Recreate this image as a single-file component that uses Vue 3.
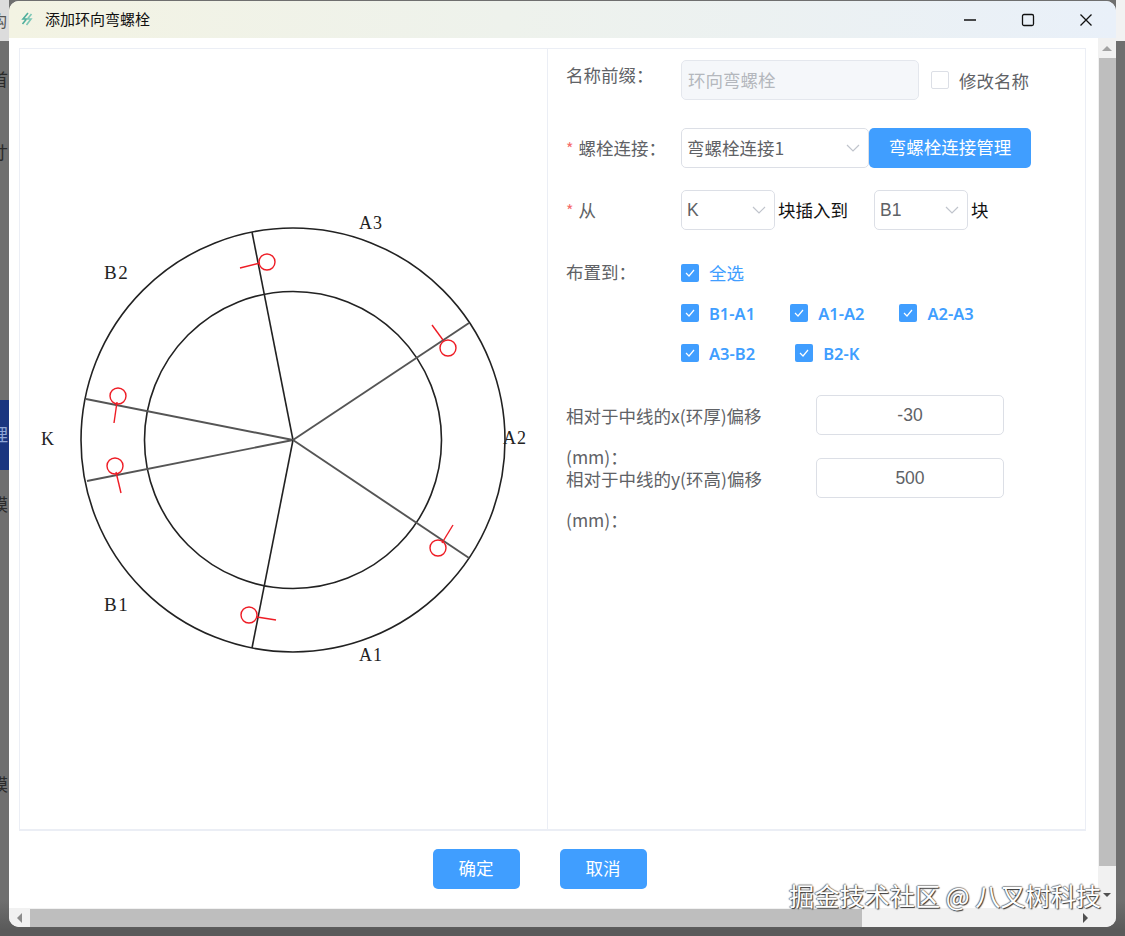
<script setup>
const boltLines = [
  { x: 252, y: 232, soft: false }, { x: 86, y: 399, soft: true }, { x: 87, y: 481, soft: true },
  { x: 252, y: 648, soft: false }, { x: 469, y: 558, soft: true }, { x: 469, y: 323, soft: true }
]
const bolts = [
  { c: [267, 262], a: [260, 263], b: [240, 268] },
  { c: [118, 396], a: [117, 402], b: [114, 423] },
  { c: [448, 348], a: [443, 340], b: [432, 325] },
  { c: [115, 466], a: [116, 472], b: [121, 493] },
  { c: [249, 615], a: [257, 617], b: [276, 620] },
  { c: [438, 548], a: [442, 543], b: [453, 525] }
]
const labels = [
  { t: 'A3', x: 359, y: 229, wide: false },
  { t: 'B2', x: 104, y: 279, wide: true },
  { t: 'K', x: 41, y: 445, wide: false },
  { t: 'A2', x: 503, y: 444, wide: false },
  { t: 'B1', x: 104, y: 611, wide: true },
  { t: 'A1', x: 359, y: 661, wide: false }
]
const rowOne = ['B1-A1', 'A1-A2', 'A2-A3']
const rowTwo = ['A3-B2', 'B2-K']
</script>

<template>
  <div class="screen">
    <div class="rail rail-left">
      <div class="rail-top"><span>构</span></div>
      <div class="rail-item h80"><span>首</span></div>
      <div class="rail-item h66"><span>寸</span></div>
      <div class="rail-gap"></div>
      <div class="rail-active"><span>理</span></div>
      <div class="rail-item h70"><span>模</span></div>
      <div class="rail-gap2"></div>
      <div class="rail-item h70"><span>模</span></div>
    </div>

    <section class="window">
      <header class="titlebar">
        <svg class="app-icon" width="14" height="14" viewBox="0 0 14 14">
          <path d="M8 1 3 7h3.500L2.500 12" fill="none" stroke="#4fae9c" stroke-width="1.600" />
          <path d="M11.500 2 7.500 7H11l-4.500 6" fill="none" stroke="#7cc7b6" stroke-width="1.600" />
        </svg>
        <span class="title">添加环向弯螺栓</span>
        <div class="controls">
          <svg width="14" height="14" viewBox="0 0 14 14"><path d="M1 7h12" stroke="#111" stroke-width="1.300" /></svg>
          <svg width="14" height="14" viewBox="0 0 14 14"><rect x="1.500" y="1.500" width="11" height="11" rx="1.500" fill="none" stroke="#111" stroke-width="1.300" /></svg>
          <svg width="14" height="14" viewBox="0 0 14 14"><path d="M1.500 1.500l11 11M12.500 1.500l-11 11" stroke="#111" stroke-width="1.300" /></svg>
        </div>
      </header>

      <div class="middle">
        <div class="viewport">
          <div class="panel">
            <div class="figure">
              <svg width="528" height="780" viewBox="20 49 528 780">
                <g fill="none" stroke="#222" stroke-width="1.600">
                  <circle cx="293" cy="440" r="212" />
                  <circle cx="293" cy="440" r="148.500" />
                </g>
                <line
                  v-for="(l, i) in boltLines"
                  :key="i"
                  class="spoke"
                  :class="{ soft: l.soft }"
                  x1="293"
                  y1="440"
                  :x2="l.x"
                  :y2="l.y"
                />
                <g fill="none" stroke="#ee1c25" stroke-width="1.400">
                  <template v-for="(b, i) in bolts" :key="i">
                    <circle :cx="b.c[0]" :cy="b.c[1]" r="8" />
                    <line :x1="b.a[0]" :y1="b.a[1]" :x2="b.b[0]" :y2="b.b[1]" />
                  </template>
                </g>
                <text v-for="l in labels" :key="l.t" class="fig-label" :class="{ spaced: l.wide }" :x="l.x" :y="l.y">{{ l.t }}</text>
              </svg>
            </div>

            <div class="form">
              <div class="row row-name">
                <label class="label">名称前缀：</label>
                <div class="input disabled name-input">环向弯螺栓</div>
                <span class="box"></span>
                <span class="rename">修改名称</span>
              </div>

              <div class="row row-link">
                <label class="label"><i>*</i>螺栓连接：</label>
                <div class="input select link-select">
                  <span>弯螺栓连接1</span>
                  <svg class="chev" width="14" height="8" viewBox="0 0 14 8"><path d="M1 1l6 6 6-6" fill="none" stroke="#c0c4cc" stroke-width="1.200" /></svg>
                </div>
                <button class="btn manage">弯螺栓连接管理</button>
              </div>

              <div class="row row-from">
                <label class="label"><i>*</i>从</label>
                <div class="input select small-select">
                  <span>K</span>
                  <svg class="chev" width="14" height="8" viewBox="0 0 14 8"><path d="M1 1l6 6 6-6" fill="none" stroke="#c0c4cc" stroke-width="1.200" /></svg>
                </div>
                <span class="plain insert">块插入到</span>
                <div class="input select small-select">
                  <span>B1</span>
                  <svg class="chev" width="14" height="8" viewBox="0 0 14 8"><path d="M1 1l6 6 6-6" fill="none" stroke="#c0c4cc" stroke-width="1.200" /></svg>
                </div>
                <span class="plain unit">块</span>
              </div>

              <div class="place">
                <label class="label place-label">布置到：</label>
                <div class="checks">
                  <div class="check-row">
                    <span class="check all">
                      <svg class="tick" width="18" height="18" viewBox="0 0 18 18"><path d="M5 9l3 3 5-6" fill="none" stroke="#fff" stroke-width="1.200" /></svg>
                      <em class="all-text">全选</em>
                    </span>
                  </div>
                  <div class="check-row first-group">
                    <span v-for="r in rowOne" :key="r" class="check">
                      <svg class="tick" width="18" height="18" viewBox="0 0 18 18"><path d="M5 9l3 3 5-6" fill="none" stroke="#fff" stroke-width="1.200" /></svg>
                      <em>{{ r }}</em>
                    </span>
                  </div>
                  <div class="check-row second-group">
                    <span v-for="r in rowTwo" :key="r" class="check">
                      <svg class="tick" width="18" height="18" viewBox="0 0 18 18"><path d="M5 9l3 3 5-6" fill="none" stroke="#fff" stroke-width="1.200" /></svg>
                      <em>{{ r }}</em>
                    </span>
                  </div>
                </div>
              </div>

              <div class="row offset offset-x">
                <label class="label wide">相对于中线的x(环厚)偏移(mm)：</label>
                <div class="input number">-30</div>
              </div>
              <div class="row offset offset-y">
                <label class="label wide">相对于中线的y(环高)偏移(mm)：</label>
                <div class="input number">500</div>
              </div>
            </div>
          </div>

          <div class="actions">
            <button class="btn action">确定</button>
            <button class="btn action">取消</button>
          </div>
        </div>

        <div class="vscroll">
          <span class="arrow-up"></span>
          <div class="vthumb"></div>
          <span class="arrow-down"></span>
        </div>
      </div>

      <div class="hscroll">
        <span class="arrow-left"></span>
        <div class="hthumb"></div>
        <span class="arrow-right"></span>
      </div>

      <div class="watermark">掘金技术社区 @ 八叉树科技</div>
    </section>

    <div class="rail rail-right">
      <div class="rail-top"></div>
    </div>
  </div>
</template>

<style scoped>
.screen {
  position: relative;
  display: flex;
  width: 1125px;
  height: 936px;
  overflow: hidden;
  background: linear-gradient(#6f6f6f 0, #6f6f6f 900px, #5a5a5a 930px);
  font-family: "Liberation Sans", "Noto Sans CJK SC", sans-serif;
  font-size: 17.500px;
  color: #606266;
}
.rail { width: 9px; flex: none; overflow: hidden; }
.rail-top {
  height: 41px;
  background: #dcdcdc;
  line-height: 44px;
  color: #555;
  font-size: 16px;
}
.rail-right .rail-top { background: #f2f2f2; }
.rail span { display: block; margin-left: -9px; white-space: nowrap; }
.rail-item {
  display: flex;
  align-items: center;
  box-sizing: border-box;
  padding-bottom: 4px;
  font-size: 17px;
  color: #2a2a2a;
}
.h80 { height: 79px; }
.h66 { height: 66px; }
.h70 { height: 70px; }
.rail-gap { height: 214px; }
.rail-gap2 { height: 210px; }
.rail-active {
  height: 70px;
  box-sizing: border-box;
  padding-bottom: 4px;
  display: flex;
  align-items: center;
  background: #1a357f;
  color: #8fa6d6;
  font-size: 17px;
}

.window {
  position: relative;
  width: 1107px;
  height: 926px;
  margin-top: 1px;
  flex: none;
  display: flex;
  flex-direction: column;
  background: #fff;
  border-radius: 10px;
  overflow: hidden;
}
.titlebar {
  height: 37px;
  flex: none;
  display: flex;
  align-items: center;
  padding-left: 11px;
  background: linear-gradient(90deg, #f3f3e3 0, #eef2ec 45%, #e9f0f9 100%);
}
.app-icon { margin: -2px 11px 0 0; }
.title {
  margin-top: -3px;
  font-size: 15px;
  color: #111;
  font-family: "Noto Sans CJK SC", sans-serif;
}
.controls {
  margin-left: auto;
  margin-right: 23px;
  display: flex;
  align-items: center;
  gap: 44px;
}

.middle { flex: 1; min-height: 0; display: flex; }
.viewport { width: 1089px; flex: none; padding: 10px 0 0 10px; box-sizing: border-box; }
.panel {
  width: 1067px;
  height: 783px;
  box-sizing: border-box;
  display: flex;
  border: 1px solid #ebeef5;
  border-bottom-width: 2px;
}
.figure {
  width: 528px;
  flex: none;
  box-sizing: border-box;
  border-right: 1px solid #ebeef5;
}
.figure svg { display: block; }
.spoke { stroke: #222; stroke-width: 1.600px; }
.spoke.soft { stroke: #555; stroke-width: 1.900px; }
.fig-label {
  font-family: "Liberation Serif", serif;
  font-size: 18px;
  letter-spacing: 1px;
  fill: #222;
}
.fig-label.spaced { font-size: 19px; letter-spacing: 1.500px; }

.form { flex: 1; padding: 11px 0 0 18px; font-family: "Noto Sans CJK SC", sans-serif; }
.row { display: flex; align-items: center; height: 40px; }
.row-name { margin-bottom: 28px; }
.row-link { margin-bottom: 22px; }
.row-from { margin-bottom: 23px; }
.label {
  width: 115px;
  flex: none;
  box-sizing: border-box;
  line-height: 40px;
  white-space: nowrap;
}
.label i { color: #f56c6c; font-style: normal; margin-right: 5px; font-size: 16px; }
.row-name .label { align-self: flex-start; margin-top: -5px; }
.input {
  height: 40px;
  box-sizing: border-box;
  border: 1px solid #dcdfe6;
  border-radius: 5px;
  padding-left: 6px;
  line-height: 38px;
  background: #fff;
  flex: none;
}
.disabled { background: #f5f7fa; border-color: #e4e7ed; color: #b4b7bd; }
.name-input { width: 238px; }
.box {
  width: 18px;
  height: 18px;
  box-sizing: border-box;
  margin-left: 12px;
  border: 1px solid #dcdfe6;
  border-radius: 2px;
  flex: none;
}
.rename { margin-left: 10px; }
.select { display: flex; align-items: center; justify-content: space-between; padding: 0 8px 0 5px; }
.link-select { width: 188px; }
.small-select { width: 94px; font-family: "Liberation Sans", sans-serif; }
.chev { flex: none; }
.btn {
  border: 0;
  border-radius: 5px;
  background: #409eff;
  color: #fff;
  font-family: "Noto Sans CJK SC", sans-serif;
  font-size: 17.500px;
  padding: 0 0 3px;
}
.manage { width: 162px; height: 40px; }
.plain { color: #111; margin-top: -2px; }
.insert { margin-left: 3px; width: 96px; flex: none; }
.unit { margin-left: 3px; }

.place { display: flex; }
.place-label { line-height: 40px; margin-top: -1px; }
.checks { display: flex; flex-direction: column; }
.check-row { display: flex; align-items: center; height: 40px; }
.first-group { gap: 35px; }
.second-group { gap: 40px; }
.check { display: inline-flex; align-items: center; gap: 10px; color: #409eff; }
.tick {
  width: 18px;
  height: 18px;
  flex: none;
  background: #409eff;
  border-radius: 2px;
}
.check em {
  font-style: normal;
  font-family: "Noto Sans", sans-serif;
  font-weight: 600;
  font-size: 16.500px;
}
.check .all-text {
  font-family: "Noto Sans CJK SC", sans-serif;
  font-weight: 400;
  font-size: 17.500px;
  margin-top: -2px;
}

.offset { align-items: flex-start; }
.offset-x { margin-top: 22px; margin-bottom: 23px; }
.wide {
  width: 250px;
  padding-right: 12px;
  white-space: normal;
  line-height: 41px;
  position: relative;
}
.number {
  width: 188px;
  padding: 0;
  text-align: center;
  font-family: "Liberation Sans", sans-serif;
  font-size: 17.500px;
}

.actions { display: flex; justify-content: center; gap: 40px; margin: 18px 38px 0 0; }
.action { width: 87px; height: 40px; }

.vscroll {
  width: 18px;
  flex: none;
  display: flex;
  flex-direction: column;
  align-items: center;
  background: #f1f1f1;
}
.arrow-up {
  margin: 8px 0 7px;
  width: 0;
  height: 0;
  border: 5px solid transparent;
  border-top: 0;
  border-bottom: 5px solid #a3a3a3;
}
.vthumb { width: 17px; height: 808px; background: #bebebe; flex: none; }
.arrow-down {
  margin-top: 27px;
  width: 0;
  height: 0;
  border: 4px solid transparent;
  border-bottom: 0;
  border-top: 4px solid #505050;
}
.hscroll {
  height: 19px;
  flex: none;
  display: flex;
  align-items: center;
  background: #f1f1f1;
}
.arrow-left {
  margin-left: 8px;
  width: 0;
  height: 0;
  border: 5px solid transparent;
  border-left: 0;
  border-right: 5px solid #8c8c8c;
}
.hthumb { width: 832px; height: 18px; margin-left: 8px; background: #bebebe; }
.arrow-right {
  margin-left: 221px;
  width: 0;
  height: 0;
  border: 5px solid transparent;
  border-right: 0;
  border-left: 5px solid #505050;
}
.watermark {
  position: absolute;
  left: 780px;
  top: 879px;
  white-space: nowrap;
  font-family: "Noto Sans CJK SC", sans-serif;
  font-size: 25.200px;
  line-height: 30px;
  color: #fff;
  text-shadow: 1px 1px 1px #333, -1px 0 1px #777, 0 -1px 1px #999;
}
</style>

<style>
html, body { margin: 0; padding: 0; }
</style>
